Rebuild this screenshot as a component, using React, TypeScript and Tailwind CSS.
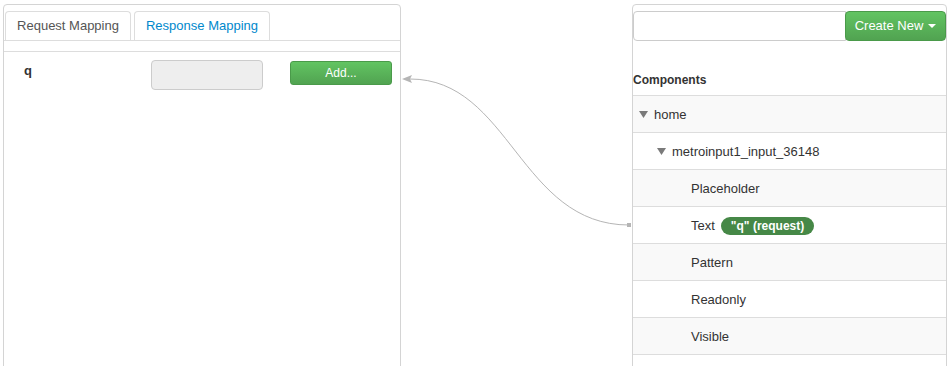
import React from 'react';

const font = { fontFamily: '"Liberation Sans", Arial, sans-serif' };

const Caret = ({ className }: { className: string }) => (
  <svg className={className} width="9" height="7" viewBox="0 0 9 7">
    <polygon points="0,0 9,0 4.5,7" fill="#7a7a7a" />
  </svg>
);

const rows = [
  { label: 'home', level: 0, caret: true },
  { label: 'metroinput1_input_36148', level: 1, caret: true },
  { label: 'Placeholder', level: 2 },
  { label: 'Text', level: 2, badge: '"q" (request)' },
  { label: 'Pattern', level: 2 },
  { label: 'Readonly', level: 2 },
  { label: 'Visible', level: 2 },
  { label: '', level: 2 },
];

const App = () => {
  return (
    <div className="relative h-[366px] w-[951px] overflow-hidden bg-white text-[13px] text-[#333]" style={font}>
      <div className="flex pl-[3px] pt-[4px]">
        {/* left mapping panel */}
        <div className="h-[400px] w-[398px] rounded-t-[4px] border border-[#d4d4d4]">
          <div className="flex h-[36px] items-end gap-[3px] border-b border-[#ddd] pl-[1px]">
            <div className="flex h-[29px] w-[126px] items-center justify-center rounded-t-[4px] border border-b-0 border-[#ddd] text-[#555]">
              Request Mapping
            </div>
            <div className="flex h-[29px] w-[136px] items-center justify-center rounded-t-[4px] border border-b-0 border-[#ddd] text-[#0088cc]">
              Response Mapping
            </div>
          </div>
          <div className="mt-[10px] border-t border-[#ddd]">
            <div className="flex pt-[8px]">
              <div className="w-[147px] pl-[20px] pt-[1px] font-bold">q</div>
              <div className="h-[30px] w-[112px] rounded-[4px] border border-[#ccc] bg-[#eee]" />
              <button className="ml-[27px] mt-[1px] flex h-[24px] w-[102px] items-center justify-center rounded-[3px] border border-[#4a9a4a] bg-gradient-to-b from-[#62c462] to-[#51a351] text-[12px] text-white">
                Add...
              </button>
            </div>
          </div>
        </div>

        {/* right components panel */}
        <div className="ml-[231px] h-[400px] w-[315px] rounded-t-[4px] border border-[#d4d4d4]">
          <div className="mt-[6px] flex">
            <div className="h-[30px] flex-1 rounded-l-[4px] border border-[#ccc] bg-white" />
            <button className="-ml-[1px] flex h-[30px] w-[101px] items-center justify-center gap-[5px] rounded-[4px] border border-[#4a9a4a] bg-gradient-to-b from-[#62c462] to-[#51a351] text-white">
              Create New
              <svg width="8" height="4" viewBox="0 0 8 4">
                <polygon points="0,0 8,0 4,4" fill="#fff" />
              </svg>
            </button>
          </div>
          <div className="flex h-[54px] items-end pb-[6px] text-[12px] font-bold">Components</div>
          <div>
            {rows.map((r, i) => (
              <div
                key={i}
                className={`flex h-[37px] items-center border-t border-[#ddd] pt-[1px] ${i % 2 === 0 ? 'bg-[#f9f9f9]' : 'bg-white'} ${
                  r.level === 0 ? 'pl-[6px]' : r.level === 1 ? 'pl-[24px]' : 'pl-[58px]'
                }`}
              >
                {r.caret && <Caret className="mr-[6px]" />}
                <span>{r.label}</span>
                {r.badge && (
                  <span className="ml-[6px] rounded-full bg-[#468847] px-[10px] py-[1px] text-[12px] font-bold leading-[16px] text-white">
                    {r.badge}
                  </span>
                )}
              </div>
            ))}
          </div>
        </div>
      </div>

      {/* connector line */}
      <svg className="pointer-events-none absolute left-0 top-0" width="951" height="366">
        <path d="M629 225 C 520 225, 510 79, 410 79" fill="none" stroke="#b5b5b5" strokeWidth="1" />
        <polygon points="402,79 412,75 410,79 412,83" fill="#b5b5b5" />
        <rect x="627" y="223" width="4" height="4" fill="#b5b5b5" />
      </svg>
    </div>
  );
};

export default App;
